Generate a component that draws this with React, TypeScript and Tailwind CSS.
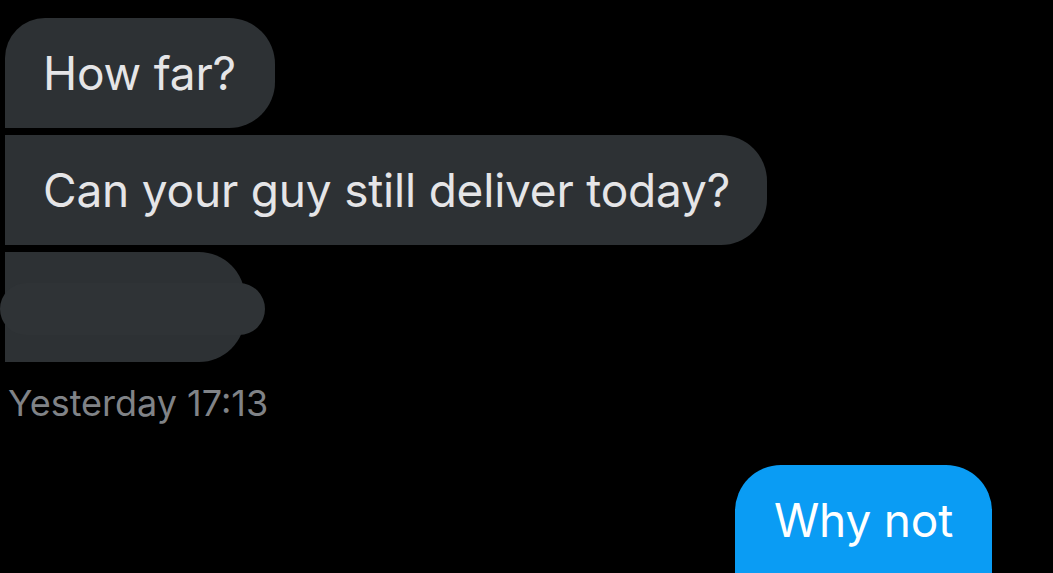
import React from "react";

/* Incoming thread: first bubble rounds the top-left, the rest sit flush on the left */
const INCOMING = [
  { id: 1, text: "How far?", first: true },
  { id: 2, text: "Can your guy still deliver today?", first: false },
];

const font = { fontFamily: "Inter, 'Liberation Sans', sans-serif" };

export default function App() {
  return (
    <div
      className="h-[573px] w-full overflow-hidden bg-black pl-[5px] pt-[18px]"
      style={font}
    >
      <div className="flex flex-col items-start gap-[7px]">
        {INCOMING.map((m) => (
          <div
            key={m.id}
            className={
              m.first
                ? "flex h-[110px] items-center rounded-tl-[40px] rounded-tr-[46px] rounded-br-[46px] bg-[#2d3134] pl-[38px] pr-[39px]"
                : "flex h-[110px] items-center rounded-tr-[46px] rounded-br-[46px] bg-[#2d3134] pl-[38px] pr-[37px]"
            }
          >
            <span className="text-[46px] leading-none tracking-[-0.2px] text-[#e5e5e7]">
              {m.text}
            </span>
          </div>
        ))}

        {/* blotted-out message */}
        <div className="relative -ml-[5px] h-[110px] w-[245px]">
          <div className="ml-[5px] h-full w-[240px] rounded-tr-[46px] rounded-br-[46px] bg-[#2d3134]" />
          <div className="absolute left-0 top-[31px] h-[52px] w-[265px] rounded-full bg-[#2f3336]" />
        </div>
      </div>

      <div className="mt-[20px] pl-[3px] text-[36px] leading-[42px] text-[#808387]">
        Yesterday 17:13
      </div>

      <div className="mt-[41px] flex justify-end pr-[61px]">
        <div className="flex h-[110px] items-center rounded-t-[46px] bg-[#0a9cf4] pl-[39px] pr-[39px]">
          <span className="text-[46px] leading-none tracking-[-0.2px] text-white">
            Why not
          </span>
        </div>
      </div>
    </div>
  );
}
